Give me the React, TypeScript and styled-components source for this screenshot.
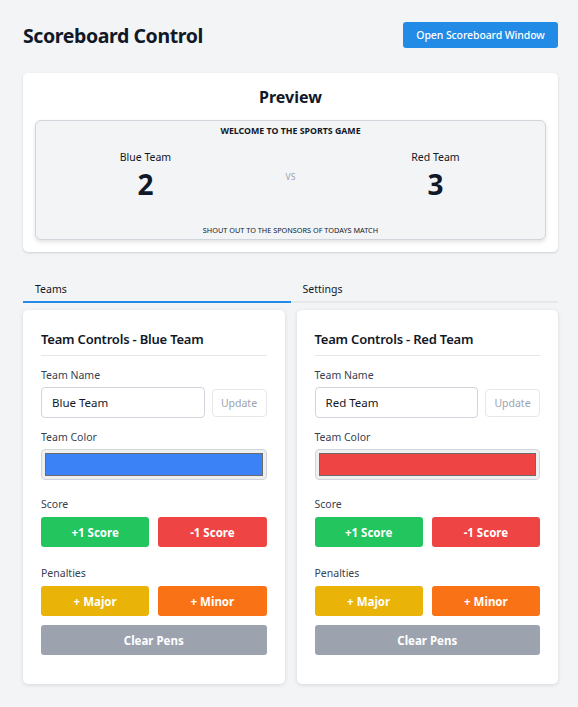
import React, { useState } from "react";
import styled, { createGlobalStyle } from "styled-components";

const Global = createGlobalStyle`
  html, body { margin: 0; padding: 0; background: #f3f4f6; }
  body { font-family: "Noto Sans", "Open Sans", sans-serif; color: #111827; }
  * { box-sizing: border-box; }
`;

const Page = styled.div`
  padding: 22px 20px 22px 23px;
  display: flex;
  flex-direction: column;
`;

const Header = styled.div`
  display: flex;
  justify-content: space-between;
  align-items: center;
  height: 26px;
  margin-bottom: 25px;
`;

const Title = styled.h1`
  margin: 0;
  font-size: 19.5px;
  font-weight: 700;
  color: #111827;
  letter-spacing: -0.4px;
`;

const PrimaryButton = styled.button`
  background: #228be6;
  color: #fff;
  border: none;
  border-radius: 3px;
  height: 26px;
  width: 155px;
  font-family: inherit;
  font-size: 10.5px;
  font-weight: 500;
  letter-spacing: -0.1px;
`;

const Card = styled.section`
  background: #fff;
  border-radius: 5px;
  box-shadow: 0 1px 3px rgba(0, 0, 0, 0.1), 0 1px 2px rgba(0, 0, 0, 0.06);
`;

const PreviewCard = styled(Card)`
  padding: 12px 12px 12px;
  display: flex;
  flex-direction: column;
`;

const PreviewTitle = styled.h2`
  margin: 0 0 11px;
  font-size: 16px;
  font-weight: 700;
  text-align: center;
  line-height: 24px;
`;

const Board = styled.div`
  background: #f3f4f6;
  border: 1px solid #d1d5db;
  border-radius: 6px;
  box-shadow: 0 2px 4px rgba(0, 0, 0, 0.12);
  height: 120px;
  display: flex;
  flex-direction: column;
  align-items: center;
  padding: 4px 0 3px;
`;

const BoardHeading = styled.div`
  font-size: 8.8px;
  font-weight: 700;
  line-height: 13px;
`;

const BoardRow = styled.div`
  display: grid;
  grid-template-columns: repeat(3, minmax(0, 1fr));
  width: 100%;
  padding: 0 37px;
  margin-top: 12px;
  flex: 1;
`;

const TeamBlock = styled.div`
  display: flex;
  flex-direction: column;
  align-items: center;
`;

const TeamLabel = styled.div`
  font-size: 10.5px;
  line-height: 14px;
`;

const Score = styled.div`
  font-size: 28px;
  font-weight: 700;
  line-height: 34px;
  margin-top: 3px;
`;

const Vs = styled.div`
  text-align: center;
  font-size: 8.5px;
  color: #9ca3af;
  padding-top: 21px;
`;

const BoardFooter = styled.div`
  font-size: 7.3px;
  line-height: 12px;
`;

const Tabs = styled.div`
  display: grid;
  grid-template-columns: repeat(2, minmax(0, 1fr));
  margin-top: 26px;
`;

const Tab = styled.div<{ $active?: boolean }>`
  font-size: 10.5px;
  padding: 4px 12px 5px;
  line-height: 14px;
  border-bottom: 2px solid ${(p) => (p.$active ? "#228be6" : "#e5e7eb")};
  color: #111827;
`;

const Columns = styled.div`
  display: grid;
  grid-template-columns: repeat(2, minmax(0, 1fr));
  gap: 12px;
  margin-top: 7px;
`;

const TeamCard = styled(Card)`
  padding: 18px 18px 29px;
  display: flex;
  flex-direction: column;
  min-width: 0;
  box-shadow: 0 1px 4px rgba(0, 0, 0, 0.12);
`;

const CardTitle = styled.h3`
  margin: 0;
  font-size: 13px;
  font-weight: 600;
  letter-spacing: -0.2px;
  line-height: 22px;
  padding-bottom: 5px;
  border-bottom: 1px solid #e5e7eb;
`;

const Label = styled.div<{ $top: number }>`
  font-size: 10.5px;
  color: #374151;
  line-height: 14px;
  margin-top: ${(p) => p.$top}px;
  margin-bottom: 5px;
`;

const InputRow = styled.div`
  display: flex;
  gap: 7px;
  align-items: center;
`;

const TextInput = styled.input`
  flex: 1;
  min-width: 0;
  height: 31px;
  border: 1px solid #d1d5db;
  border-radius: 4px;
  padding: 0 10px;
  font-family: inherit;
  font-size: 11.5px;
  color: #111827;
  background: #fff;
  outline: none;
`;

const GhostButton = styled.button`
  flex: 0 0 55px;
  width: 55px;
  height: 28px;
  padding: 0;
  border: 1px solid #e5e7eb;
  border-radius: 4px;
  background: #fff;
  color: #9ca3af;
  font-family: inherit;
  font-size: 10.5px;
`;

const ColorInput = styled.input`
  width: 100%;
  height: 31px;
  padding: 3px;
  border: 1px solid #d1d5db;
  border-radius: 4px;
  background: #efefef;
  display: block;
  -webkit-appearance: none;
  &::-webkit-color-swatch-wrapper { padding: 0; }
  &::-webkit-color-swatch { border: 1px solid #6b6b6b; border-radius: 0; }
`;

const ButtonGrid = styled.div`
  display: grid;
  grid-template-columns: repeat(2, minmax(0, 1fr));
  gap: 9px 9px;
  margin-top: 1px;
`;

const ActionButton = styled.button<{ $bg: string; $wide?: boolean }>`
  background: ${(p) => p.$bg};
  grid-column: ${(p) => (p.$wide ? "1 / -1" : "auto")};
  color: #fff;
  border: none;
  border-radius: 3px;
  height: 30px;
  padding: 0;
  font-family: inherit;
  font-size: 11.5px;
  font-weight: 700;
`;

const TeamPanel: React.FC<{ name: string; color: string }> = ({ name, color }) => {
  const [val, setVal] = useState(name);
  const [col, setCol] = useState(color);
  return (
    <TeamCard>
      <CardTitle>Team Controls - {name}</CardTitle>
      <Label $top={12}>Team Name</Label>
      <InputRow>
        <TextInput value={val} onChange={(e) => setVal(e.target.value)} />
        <GhostButton disabled>Update</GhostButton>
      </InputRow>
      <Label $top={12}>Team Color</Label>
      <ColorInput type="color" value={col} onChange={(e) => setCol(e.target.value)} />
      <Label $top={17}>Score</Label>
      <ButtonGrid>
        <ActionButton $bg="#22c55e">+1 Score</ActionButton>
        <ActionButton $bg="#ef4444">-1 Score</ActionButton>
      </ButtonGrid>
      <Label $top={19}>Penalties</Label>
      <ButtonGrid>
        <ActionButton $bg="#eab308">+ Major</ActionButton>
        <ActionButton $bg="#f97316">+ Minor</ActionButton>
        <ActionButton $bg="#9ca3af" $wide>Clear Pens</ActionButton>
      </ButtonGrid>
    </TeamCard>
  );
};

export default function App() {
  return (
    <>
      <Global />
      <Page>
        <Header>
          <Title>Scoreboard Control</Title>
          <PrimaryButton>Open Scoreboard Window</PrimaryButton>
        </Header>
        <PreviewCard>
          <PreviewTitle>Preview</PreviewTitle>
          <Board>
            <BoardHeading>WELCOME TO THE SPORTS GAME</BoardHeading>
            <BoardRow>
              <TeamBlock>
                <TeamLabel>Blue Team</TeamLabel>
                <Score>2</Score>
              </TeamBlock>
              <Vs>VS</Vs>
              <TeamBlock>
                <TeamLabel>Red Team</TeamLabel>
                <Score>3</Score>
              </TeamBlock>
            </BoardRow>
            <BoardFooter>SHOUT OUT TO THE SPONSORS OF TODAYS MATCH</BoardFooter>
          </Board>
        </PreviewCard>
        <Tabs>
          <Tab $active>Teams</Tab>
          <Tab>Settings</Tab>
        </Tabs>
        <Columns>
          <TeamPanel name="Blue Team" color="#3b82f6" />
          <TeamPanel name="Red Team" color="#ef4444" />
        </Columns>
      </Page>
    </>
  );
}
